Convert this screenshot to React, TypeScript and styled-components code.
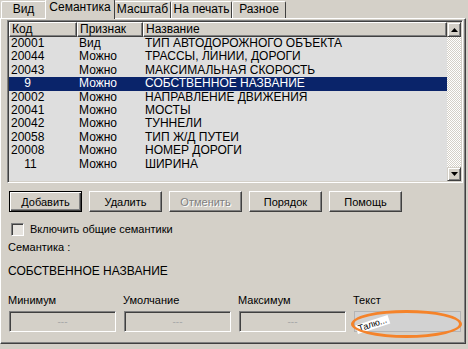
import React from 'react';
import styled, { createGlobalStyle, css } from 'styled-components';

const face = '#d4d0c8';
const shadow = '#808080';
const dark = '#404040';

const GlobalStyle = createGlobalStyle`
    html, body {
        margin: 0;
        padding: 0;
        background: ${face};
    }
`;

const Window = styled.div`
    width: 468px;
    height: 349px;
    background: ${face};
    font-family: "Liberation Sans", Arial, sans-serif;
    color: #000;
    overflow: hidden;
`;

const TabStrip = styled.div`
    display: flex;
    align-items: flex-end;
    height: 18px;
    padding-left: 1px;
    position: relative;
    z-index: 1;
`;

const Tab = styled.div<{ $active?: boolean; $width: number }>`
    box-sizing: border-box;
    width: ${(p) => p.$width}px;
    height: 17px;
    font-size: 12px;
    line-height: 15px;
    text-align: center;
    border-top: 1px solid #fff;
    border-left: 1px solid #fff;
    border-right: 1px solid ${dark};
    border-radius: 2px 2px 0 0;
    white-space: nowrap;
    ${(p) =>
        p.$active &&
        css`
            height: 20px;
            margin: 0 -1px -1px -1px;
            background: ${face};
            line-height: 14px;
            position: relative;
        `}
`;

const Panel = styled.div`
    box-sizing: border-box;
    width: 466px;
    height: 326px;
    border-top: 1px solid #fff;
    border-left: 1px solid #fff;
    border-right: 1px solid ${dark};
    border-bottom: 1px solid ${dark};
    box-shadow: inset -1px -1px 0 ${shadow};
    padding: 1px 2px 0 6px;
    display: flex;
    flex-direction: column;
`;

const ListBox = styled.div`
    box-sizing: border-box;
    height: 163px;
    display: flex;
    border-top: 1px solid ${shadow};
    border-left: 1px solid ${shadow};
    border-right: 1px solid #fff;
    border-bottom: 1px solid #fff;
    box-shadow: inset 1px 1px 0 ${dark}, inset -1px -1px 0 ${face};
    padding: 1px;
    background: #dedede;
`;

const ListBody = styled.div`
    flex: 1;
    display: flex;
    flex-direction: column;
    font-size: 12px;
`;

const columns = '68px 66px 1fr';

const HeaderRow = styled.div`
    display: grid;
    grid-template-columns: ${columns};
    height: 15px;
    background: ${face};
`;

const HeaderCell = styled.div`
    box-sizing: border-box;
    border-top: 1px solid #fff;
    border-left: 1px solid #fff;
    border-right: 1px solid ${dark};
    border-bottom: 1px solid ${dark};
    box-shadow: inset -1px -1px 0 ${shadow};
    padding-left: 2px;
    line-height: 13px;
`;

const Row = styled.div<{ $selected?: boolean }>`
    display: grid;
    grid-template-columns: ${columns};
    height: 13.4px;
    line-height: 13px;
    ${(p) =>
        p.$selected &&
        css`
            background: #0a246a;
            color: #fff;
        `}
`;

const Cell = styled.div`
    padding-left: 2px;
    white-space: pre;
    overflow: hidden;
`;

const ScrollBar = styled.div`
    width: 14px;
    display: flex;
    flex-direction: column;
`;

const ScrollButton = styled.div<{ $h: number }>`
    box-sizing: border-box;
    height: ${(p) => p.$h}px;
    background: ${face};
    border-top: 1px solid ${face};
    border-left: 1px solid ${face};
    border-right: 1px solid ${dark};
    border-bottom: 1px solid ${dark};
    box-shadow: inset 1px 1px 0 #fff, inset -1px -1px 0 ${shadow};
    display: flex;
    align-items: center;
    justify-content: center;
`;

const ScrollTrack = styled.div`
    flex: 1;
    background: repeating-conic-gradient(#fff 0 25%, ${face} 0 50%) 0 0 / 2px 2px;
`;

const ButtonRow = styled.div`
    display: flex;
    gap: 7px;
    margin: 8px 0 0 2px;
`;

const Button = styled.div<{ $default?: boolean; $disabled?: boolean }>`
    box-sizing: border-box;
    width: 73px;
    height: 21px;
    font-size: 11px;
    display: flex;
    align-items: center;
    justify-content: center;
    background: ${face};
    border-top: 1px solid #fff;
    border-left: 1px solid #fff;
    border-right: 1px solid ${dark};
    border-bottom: 1px solid ${dark};
    box-shadow: inset -1px -1px 0 ${shadow};
    ${(p) =>
        p.$default &&
        css`
            border: 1px solid #000;
            box-shadow: inset 1px 1px 0 #fff, inset -1px -1px 0 ${dark}, inset -2px -2px 0 ${shadow};
        `}
    ${(p) =>
        p.$disabled &&
        css`
            color: ${shadow};
            text-shadow: 1px 1px 0 #fff;
        `}
`;

const CheckRow = styled.div`
    display: flex;
    align-items: center;
    gap: 6px;
    margin: 10px 0 0 4px;
    height: 14px;
    font-size: 11px;
`;

const CheckBox = styled.div`
    box-sizing: border-box;
    width: 13px;
    height: 13px;
    background: #e6e3de;
    border-top: 1px solid ${shadow};
    border-left: 1px solid ${shadow};
    border-right: 1px solid #fff;
    border-bottom: 1px solid #fff;
    box-shadow: inset 1px 1px 0 ${dark};
`;

const Caption = styled.div`
    font-size: 11px;
    line-height: 14px;
    margin: 4px 0 0 1px;
`;

const Value = styled.div`
    font-size: 12px;
    line-height: 14px;
    margin: 10px 0 0 1px;
`;

const FieldGrid = styled.div`
    display: grid;
    grid-template-columns: repeat(4, 107px);
    column-gap: 8px;
    margin: 15px 0 0 2px;
`;

const FieldBlock = styled.div`
    display: flex;
    flex-direction: column;
    position: relative;
`;

const FieldLabel = styled.div`
    font-size: 11px;
    line-height: 14px;
    margin-left: -1px;
`;

const Field = styled.div`
    box-sizing: border-box;
    height: 21px;
    margin-top: 4px;
    background: ${face};
    border-top: 1px solid ${shadow};
    border-left: 1px solid ${shadow};
    border-right: 1px solid #fff;
    border-bottom: 1px solid #fff;
    box-shadow: inset 1px 1px 0 ${dark};
    display: flex;
    align-items: center;
    justify-content: center;
    font-size: 10px;
    color: #a8a8a8;
`;

const TextField = styled.div`
    box-sizing: border-box;
    height: 21px;
    margin-top: 4px;
    background: #d2d2d2;
    border: 1px solid #b4b4b4;
    padding: 6px 0 0 3px;
`;

const SlantText = styled.span`
    display: inline-block;
    padding: 0 2px;
    font-size: 9px;
    line-height: 9px;
    background: #fff;
    transform: rotate(-18deg);
    transform-origin: left bottom;
`;

const Highlight = styled.div`
    position: absolute;
    left: -3px;
    top: 17px;
    width: 111px;
    height: 28px;
    box-sizing: border-box;
    border: 3px solid #f5832a;
    border-radius: 50%;
    pointer-events: none;
`;

const rows = [
    { code: '20001', sign: 'Вид', name: 'ТИП АВТОДОРОЖНОГО ОБЪЕКТА' },
    { code: '20044', sign: 'Можно', name: 'ТРАССЫ, ЛИНИИ, ДОРОГИ' },
    { code: '20043', sign: 'Можно', name: 'МАКСИМАЛЬНАЯ СКОРОСТЬ' },
    { code: '    9', sign: 'Можно', name: 'СОБСТВЕННОЕ НАЗВАНИЕ', selected: true },
    { code: '20002', sign: 'Можно', name: 'НАПРАВЛЕНИЕ ДВИЖЕНИЯ' },
    { code: '20041', sign: 'Можно', name: 'МОСТЫ' },
    { code: '20042', sign: 'Можно', name: 'ТУННЕЛИ' },
    { code: '20058', sign: 'Можно', name: 'ТИП Ж/Д ПУТЕЙ' },
    { code: '20008', sign: 'Можно', name: 'НОМЕР ДОРОГИ' },
    { code: '    11', sign: 'Можно', name: 'ШИРИНА' },
];

const tabs = [
    { label: 'Вид', width: 45 },
    { label: 'Семантика', width: 70, active: true },
    { label: 'Масштаб', width: 57 },
    { label: 'На печать', width: 61 },
    { label: 'Разное', width: 54 },
];

const Arrow: React.FC<{ down?: boolean }> = ({ down }) => (
    <svg width="7" height="4" viewBox="0 0 7 4">
        <polygon points={down ? '0,0 7,0 3.5,4' : '0,4 7,4 3.5,0'} fill="#000" />
    </svg>
);

const App: React.FC = () => {
    return (
        <Window>
            <GlobalStyle />
            <TabStrip>
                {tabs.map((t) => (
                    <Tab key={t.label} $active={t.active} $width={t.width}>
                        {t.label}
                    </Tab>
                ))}
            </TabStrip>
            <Panel>
                <ListBox>
                    <ListBody>
                        <HeaderRow>
                            <HeaderCell>Код</HeaderCell>
                            <HeaderCell>Признак</HeaderCell>
                            <HeaderCell>Название</HeaderCell>
                        </HeaderRow>
                        {rows.map((r) => (
                            <Row key={r.code} $selected={r.selected}>
                                <Cell>{r.code}</Cell>
                                <Cell>{r.sign}</Cell>
                                <Cell>{r.name}</Cell>
                            </Row>
                        ))}
                    </ListBody>
                    <ScrollBar>
                        <ScrollButton $h={15}>
                            <Arrow />
                        </ScrollButton>
                        <ScrollTrack />
                        <ScrollButton $h={14}>
                            <Arrow down />
                        </ScrollButton>
                    </ScrollBar>
                </ListBox>
                <ButtonRow>
                    <Button $default>Добавить</Button>
                    <Button>Удалить</Button>
                    <Button $disabled>Отменить</Button>
                    <Button>Порядок</Button>
                    <Button>Помощь</Button>
                </ButtonRow>
                <CheckRow>
                    <CheckBox />
                    Включить общие семантики
                </CheckRow>
                <Caption>Семантика :</Caption>
                <Value>СОБСТВЕННОЕ НАЗВАНИЕ</Value>
                <FieldGrid>
                    <FieldBlock>
                        <FieldLabel>Минимум</FieldLabel>
                        <Field>---</Field>
                    </FieldBlock>
                    <FieldBlock>
                        <FieldLabel>Умолчание</FieldLabel>
                        <Field>---</Field>
                    </FieldBlock>
                    <FieldBlock>
                        <FieldLabel>Максимум</FieldLabel>
                        <Field>---</Field>
                    </FieldBlock>
                    <FieldBlock>
                        <FieldLabel>Текст</FieldLabel>
                        <TextField>
                            <SlantText>Талю...</SlantText>
                        </TextField>
                        <Highlight />
                    </FieldBlock>
                </FieldGrid>
            </Panel>
        </Window>
    );
};

export default App;
